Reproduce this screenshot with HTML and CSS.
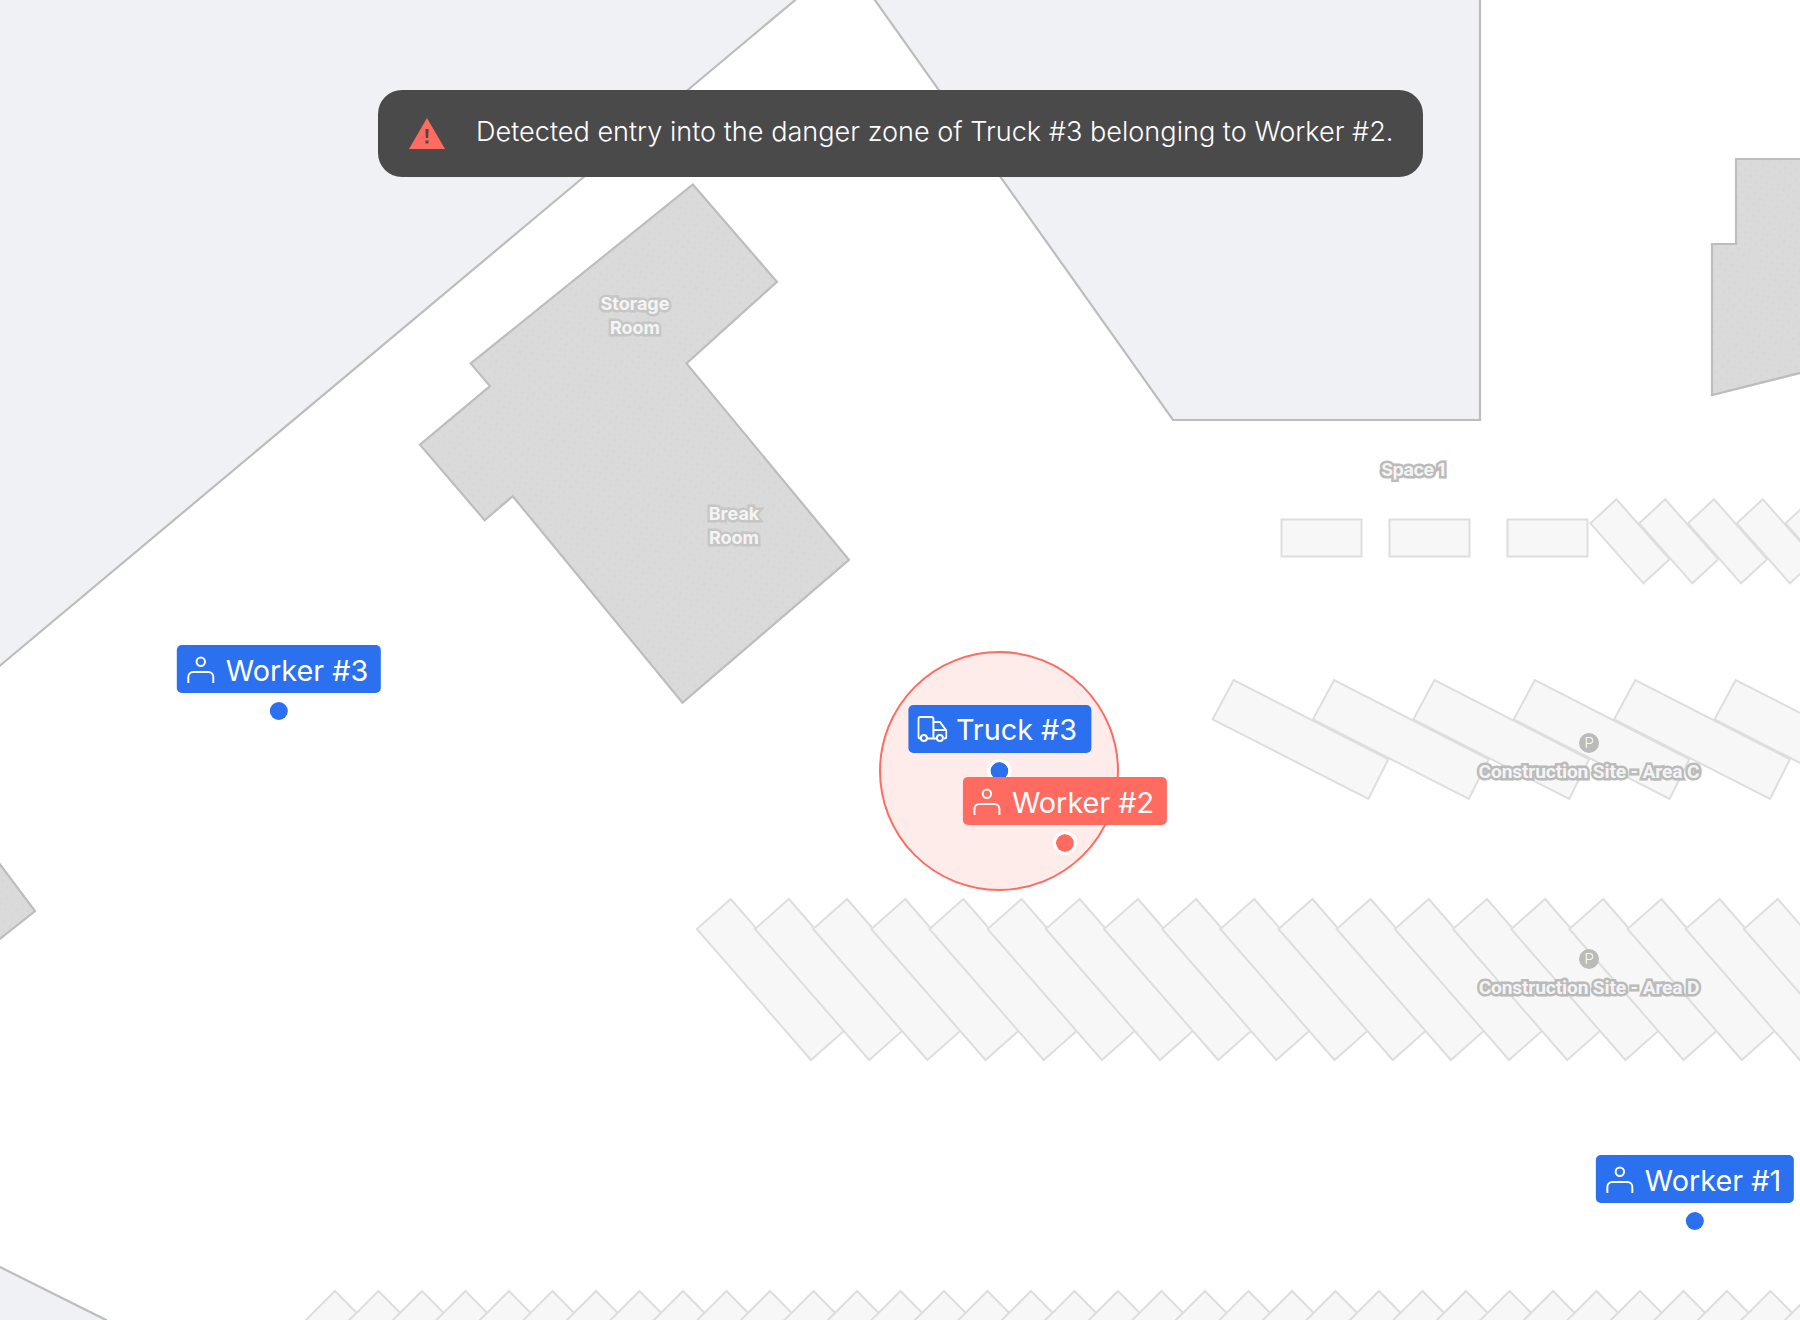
FILE: index.html
```html
<!DOCTYPE html>
<html lang="en">
<head>
<meta charset="utf-8">
<title>Site map</title>
<link rel="stylesheet" href="styles.css">
</head>
<body>
<main class="map">
  <svg class="floor" width="1800" height="1320" viewBox="0 0 1800 1320" xmlns="http://www.w3.org/2000/svg">
    <defs>
      <pattern id="dots" width="8" height="8" patternUnits="userSpaceOnUse" patternTransform="rotate(-40)">
        <rect width="8" height="8" fill="#dadadb"/>
        <circle cx="4" cy="4" r="0.5" fill="#c4c4c4"/>
      </pattern>
      <polygon id="slotD" points="730.7,899 696.8,929 811,1060 845,1030"/>
      <polygon id="slotC" points="1233.7,680 1212.6,719.3 1368.4,799 1388.3,759.3"/>
      <polygon id="slotS" points="1616.4,499.3 1590.4,523.3 1643.5,583.3 1669.6,559.3"/>
      <polygon id="slotB" points="335,1291 356.75,1313 316.75,1353 295,1331"/>
    </defs>

    <g class="land">
      <polygon points="-4,-4 800,-4 -4,669"/>
      <polygon points="872,-4 1480,-4 1480,420 1173,420"/>
      <polygon points="-4,1265 106,1320 106,1324 -4,1324"/>
    </g>

    <g class="building">
      <polygon points="692.800,184.500 777,281.800 686.500,363.400 849,559.900 682.500,702.700 512.700,496.200 484.700,520.300 420,444.600 490,386 470.700,363.400"/>
      <polygon points="1736,159 1804,159 1804,372 1712,395 1712,244 1736,244"/>
      <polygon points="-4,859 35,911 -4,942"/>
    </g>

    <g class="slots">
      <rect x="1281.5" y="519.5" width="80" height="37"/>
      <rect x="1389.5" y="519.5" width="80" height="37"/>
      <rect x="1507.5" y="519.5" width="80" height="37"/>

      <use href="#slotS"/><use href="#slotS" x="48.8"/><use href="#slotS" x="97.6"/><use href="#slotS" x="146.4"/><use href="#slotS" x="195.2"/>

      <use href="#slotC"/><use href="#slotC" x="100.4"/><use href="#slotC" x="200.8"/><use href="#slotC" x="301.2"/><use href="#slotC" x="401.6"/><use href="#slotC" x="502"/>

      <use href="#slotD"/><use href="#slotD" x="58.17"/><use href="#slotD" x="116.34"/><use href="#slotD" x="174.51"/><use href="#slotD" x="232.68"/><use href="#slotD" x="290.85"/><use href="#slotD" x="349.02"/><use href="#slotD" x="407.19"/><use href="#slotD" x="465.36"/><use href="#slotD" x="523.53"/><use href="#slotD" x="581.7"/><use href="#slotD" x="639.87"/><use href="#slotD" x="698.04"/><use href="#slotD" x="756.21"/><use href="#slotD" x="814.38"/><use href="#slotD" x="872.55"/><use href="#slotD" x="930.72"/><use href="#slotD" x="988.89"/><use href="#slotD" x="1047.06"/><use href="#slotD" x="1105.23"/>

      <use href="#slotB"/><use href="#slotB" x="43.5"/><use href="#slotB" x="87"/><use href="#slotB" x="130.5"/><use href="#slotB" x="174"/><use href="#slotB" x="217.5"/><use href="#slotB" x="261"/><use href="#slotB" x="304.5"/><use href="#slotB" x="348"/><use href="#slotB" x="391.5"/><use href="#slotB" x="435"/><use href="#slotB" x="478.5"/><use href="#slotB" x="522"/><use href="#slotB" x="565.5"/><use href="#slotB" x="609"/><use href="#slotB" x="652.5"/><use href="#slotB" x="696"/><use href="#slotB" x="739.5"/><use href="#slotB" x="783"/><use href="#slotB" x="826.5"/><use href="#slotB" x="870"/><use href="#slotB" x="913.5"/><use href="#slotB" x="957"/><use href="#slotB" x="1000.5"/><use href="#slotB" x="1044"/><use href="#slotB" x="1087.5"/><use href="#slotB" x="1131"/><use href="#slotB" x="1174.5"/><use href="#slotB" x="1218"/><use href="#slotB" x="1261.5"/><use href="#slotB" x="1305"/><use href="#slotB" x="1348.5"/><use href="#slotB" x="1392"/><use href="#slotB" x="1435.5"/><use href="#slotB" x="1479"/>
    </g>
  </svg>

  <div class="place place-storage">Storage<br>Room</div>
  <div class="place place-break">Break<br>Room</div>
  <div class="place place-space">Space 1</div>
  <div class="parking parking-c"><span class="parking-pin">P</span><span class="place-road">Construction Site - Area C</span></div>
  <div class="parking parking-d"><span class="parking-pin">P</span><span class="place-road">Construction Site - Area D</span></div>

  <div class="zone"></div>

  <div class="marker marker-w3">
    <div class="tag">
      <svg class="tag-icon" width="28" height="28" viewBox="0 0 28 28"><circle cx="14" cy="5.8" r="4.2"/><path d="M1.5 27V21a5 5 0 0 1 5-5h15a5 5 0 0 1 5 5v6"/></svg>
      <span>Worker #3</span>
    </div>
    <span class="dot"></span>
  </div>

  <div class="marker marker-t3">
    <div class="tag tag-truck">
      <svg class="tag-icon" width="30" height="26" viewBox="0 0 30 26"><path d="M3.4 22.5H3a2 2 0 0 1-2-2V3a2 2 0 0 1 2-2h11a2 2 0 0 1 2 2v19.5h-6.4"/><path d="M16 6h6.5l6.5 8.500V20.500a2 2 0 0 1-2 2h-.4M19 22.500h-3M16 14h13"/><circle cx="6.500" cy="22" r="3"/><circle cx="22.500" cy="22" r="3"/></svg>
      <span>Truck #3</span>
    </div>
    <span class="dot dot-ring"></span>
  </div>

  <div class="marker marker-w2">
    <div class="tag tag-danger">
      <svg class="tag-icon" width="28" height="28" viewBox="0 0 28 28"><circle cx="14" cy="5.8" r="4.2"/><path d="M1.5 27V21a5 5 0 0 1 5-5h15a5 5 0 0 1 5 5v6"/></svg>
      <span>Worker #2</span>
    </div>
    <span class="dot dot-ring dot-danger"></span>
  </div>

  <div class="marker marker-w1">
    <div class="tag">
      <svg class="tag-icon" width="28" height="28" viewBox="0 0 28 28"><circle cx="14" cy="5.8" r="4.2"/><path d="M1.5 27V21a5 5 0 0 1 5-5h15a5 5 0 0 1 5 5v6"/></svg>
      <span>Worker #1</span>
    </div>
    <span class="dot"></span>
  </div>

  <div class="alert">
    <svg class="alert-icon" width="36" height="31" viewBox="0 0 36 31"><path class="alert-tri" d="M18 0 36 31H0Z"/><path class="alert-mark" d="M16.400 11h3.200l-.4 9h-2.400ZM16.500 22.500h3v3h-3Z"/></svg>
    <p class="alert-text">Detected entry into the danger zone of Truck #3 belonging to Worker #2.</p>
  </div>
</main>
</body>
</html>
```

FILE: styles.css
```css
* {
  box-sizing: border-box;
}

html,
body {
  margin: 0;
  padding: 0;
  background: #fff;
}

.map {
  position: relative;
  width: 1800px;
  height: 1320px;
  overflow: hidden;
  background: #fff;
  font-family: Inter, "Liberation Sans", sans-serif;
}

.floor {
  position: absolute;
  inset: 0;
  display: block;
}

.land polygon {
  fill: #f0f1f5;
  stroke: #bdbdbd;
  stroke-width: 2.200;
}

.building polygon {
  fill: url(#dots);
  stroke: #bdbdbd;
  stroke-width: 2.200;
}

.slots rect,
.slots use {
  fill: #f7f7f7;
  stroke: #dedede;
  stroke-width: 2;
}

.place,
.place-road {
  color: #f4f4f4;
  font-weight: 700;
  -webkit-text-stroke: 5px #c6c6c6;
  paint-order: stroke fill;
}

.place {
  position: absolute;
  width: 120px;
  font-size: 18px;
  line-height: 24px;
  text-align: center;
}

.place-storage {
  left: 575px;
  top: 292px;
}

.place-break {
  left: 674px;
  top: 502px;
}

.place-space {
  left: 1353px;
  top: 458px;
  letter-spacing: -0.5px;
  -webkit-text-stroke-color: #bbb;
}

.parking {
  position: absolute;
  left: 1439px;
  width: 300px;
  display: flex;
  flex-direction: column;
  align-items: center;
  gap: 8px;
}

.parking-c {
  top: 733px;
}

.parking-d {
  top: 949px;
}

.parking-pin {
  display: flex;
  align-items: center;
  justify-content: center;
  width: 20px;
  height: 20px;
  border-radius: 50%;
  background: #bbb;
  color: #fff;
  font-family: Roboto, sans-serif;
  font-size: 15px;
  font-weight: 300;
  line-height: 1;
}

.place-road {
  font-family: Roboto, sans-serif;
  font-size: 19.200px;
  font-weight: 700;
  letter-spacing: -0.15px;
  line-height: 22px;
  white-space: nowrap;
  -webkit-text-stroke-color: #bbb;
}

.zone {
  position: absolute;
  left: 879px;
  top: 651px;
  width: 240px;
  height: 240px;
  border: 2px solid #ff6b60;
  border-radius: 50%;
  background: #feeceb;
}

.marker {
  position: absolute;
  display: flex;
  flex-direction: column;
  align-items: center;
  gap: 6px;
  transform: translateX(-50%);
}

.marker-w3 {
  left: 279px;
  top: 645px;
}

.marker-t3 {
  left: 999.500px;
  top: 705px;
}

.marker-w2 {
  left: 1065px;
  top: 777px;
}

.marker-w1 {
  left: 1695px;
  top: 1155px;
}

.tag {
  display: flex;
  align-items: center;
  gap: 11px;
  height: 48px;
  padding: 2px 13px 0 10px;
  border-radius: 5px;
  background: #2b70ef;
  color: #fff;
  font-size: 28.800px;
  font-weight: 400;
  white-space: nowrap;
}

.tag-truck {
  gap: 9px;
  padding-left: 9px;
  padding-right: 14px;
  padding-bottom: 2px;
}

.tag-danger {
  background: #ff6b60;
}

.tag-icon {
  flex: none;
  fill: none;
  stroke: #fff;
  stroke-width: 2;
}

.dot {
  display: block;
  width: 24px;
  height: 24px;
  border: 3px solid transparent;
  border-radius: 50%;
  background: #2b70ef;
  background-clip: padding-box;
}

.dot-ring {
  border-color: #fff;
}

.dot-danger {
  background: #ff6b60;
  background-clip: padding-box;
}

.alert {
  position: absolute;
  left: 378px;
  top: 90px;
  display: flex;
  align-items: center;
  gap: 31px;
  width: 1045px;
  height: 87px;
  padding: 0 31px;
  border-radius: 24px;
  background: #4a4a4a;
}

.alert-icon {
  flex: none;
}

.alert-tri {
  fill: #ff6b60;
}

.alert-mark {
  fill: #4a4a4a;
}

.alert-text {
  margin: 0 0 4px;
  color: #fff;
  font-size: 27.100px;
  font-weight: 330;
  white-space: nowrap;
}
```
